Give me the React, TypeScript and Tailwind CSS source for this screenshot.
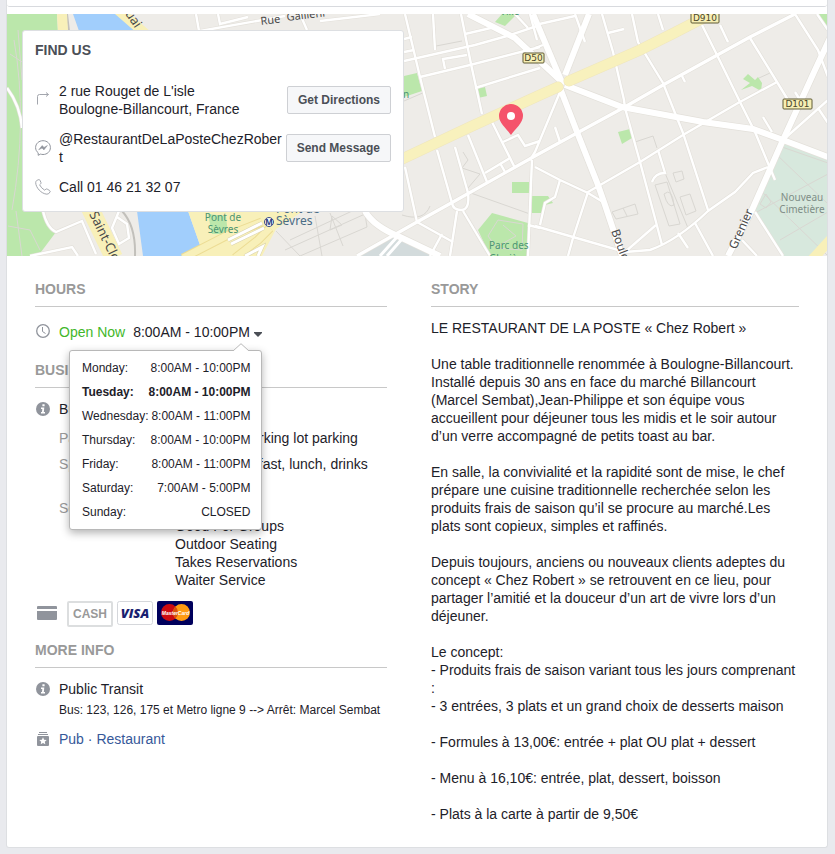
import React from "react";

const minorStreets = [
  "M405 14 420 77 435 137", "M437 150 452 203", "M433 14 435 50",
  "M461 14 471 64 482 114", "M468 135 487 182", "M320 21 380 14",
  "M404 61 475 45 507 36 540 25", "M465 34 495 27", "M420 77 470 65 540 47",
  "M445 69 443 59 467 55", "M475 88 540 68", "M492 122 515 168",
  "M503 142 518 135 525 146 540 141", "M485 173 510 158", "M500 163 505 172",
  "M455 147 468 193Q470 210 461 210 453 210 452 203", "M463 211 490 256",
  "M457 211 450 256", "M405 167 417 222 453 242", "M532 160 528 256",
  "M528 225 540 228", "M442 234 430 256", "M515 14 528 28", "M530 14 537 40",
  "M404 39 412 37", "M404 52 414 50",
  "M602 14 613 52 624 100 625 108 640 162 656 222 662 245",
  "M632 14 638 42 663 83 683 133 708 210", "M658 14 663 30",
  "M702 25 717 55 740 102 755 132 775 180", "M720 25 728 42",
  "M750 38 777 82 788 100", "M795 14 818 50 828 77", "M817 14 828 30",
  "M777 82 738 103 683 135 640 162 588 192 573 238 568 256",
  "M535 167 560 180 588 193 603 202", "M560 180 555 197 545 203 540 225",
  "M535 226 573 237 625 252 650 250Q678 240 708 211L735 192 753 173 768 167",
  "M608 33 624 29", "M535 25 575 16", "M575 14 585 42", "M555 127 560 142",
  "M763 117 772 132", "M795 92 800 100", "M783 140 828 100", "M818 108 828 123",
  "M658 150 665 173Q655 173 652 182", "M682 76 685 82", "M678 233 688 248",
  "M695 223 713 256", "M755 212 783 256", "M625 252 656 225", "M742 240 757 256",
  "M560 92 535 152 530 160", "M535 48 543 45",
  "M7 88Q20 105 22 128", "M43 211Q47 228 56 232L82 221 96 254", "M30 256 72 247 78 256",
  "M196 14 199 31", "M218 14 220 24 248 17", "M200 31 285 16", "M300 14 307 30",
  "M119 211 112 228 119 244 129 238 127 224 117 217",
];

const mainStreets = [
  "M795 14 750 37 663 85 623 108 577 133 535 156 453 202 417 222 357 256",
];

const avenues = [
  "M468 14 515 38 560 80", "M533 14 563 85", "M589 14 565 75",
  "M565 85 622 107 703 122 753 129 783 140 828 157",
  "M560 88 577 132 598 185 605 205 622 256",
  "M830 38 815 70 783 140 752 210 728 256",
  "M365 211Q373 226 400 237L440 256",
];

const buildings = [
  "M612 212 635 204 638 214 616 219ZM623 208 627 216",
  "M655 185 667 182 680 224 669 226Z", "M664 194Q672 187 674 205 668 209 664 194",
  "M673 173 682 171 684 179 676 182Z", "M680 197 690 194 696 211 686 215Z",
  "M635 142 653 136 657 148", "M665 173 688 228",
  "M775 153 828 204M755 213 828 174M780 240 828 212M760 190 828 256M782 147 828 163",
  "M760 204 766 194 771 202 766 208Z", "M759 78 770 73",
  "M285 250 365 214 367 227 300 256M290 240 365 205M315 216 322 256M330 213 343 246M330 230 332 216 342 225Z",
  "M276 231 300 256", "M463 152 468 160 462 168 480 174 468 188", "M468 192 530 214",
  "M498 220 523 224 522 250 497 248 488 236ZM503 225 516 236 500 245",
  "M402 215Q424 222 430 206", "M436 46 462 41", "M404 101 425 92",
  "M14 40Q28 120 12 210M18 30 22 80M10 54 22 62",
  "M8 226 30 230 40 250M16 211 22 256",
];

const boulevard = "M400 160 470 127 540 95 558 87M569 81 640 50 672 34 705 17";
const ramps = "M183 258 226 236 262 222M235 258 258 240 270 228";

function Badge({ x, y, w, label }: { x: number; y: number; w: number; label: string }) {
  return (
    <g>
      <rect x={x} y={y} width={w} height="10" rx="1" fill="#f6eeb4" stroke="#5f5a35" />
      <text x={x + w / 2} y={y + 8} textAnchor="middle" className="font-['DejaVu_Sans'] text-[9px]" fill="#4a472b">
        {label}
      </text>
    </g>
  );
}

function CityMap() {
  return (
    <svg
      className="absolute inset-0 h-full w-full font-['Noto_Sans']"
      viewBox="7 14 820 242"
      preserveAspectRatio="xMinYMin slice"
      role="img"
      aria-label="Map"
    >
      <rect x="7" y="14" width="820" height="242" fill="#eeece8" />
      <path d="M7 14H57L62 120 43 211 47 226 56 232 38 256H7Z" fill="#bbe7ab" />
      <path d="M73 14H117L136 32 120 120 188 211 200 245 183 256H143L137 211 100 120 79 31Z" fill="#a1cefc" />
      <path d="M357 256 397 234 440 256Z" fill="#d3dbdc" />
      <path d="M783 143 828 160V238L810 256H783L755 210Z" fill="#d7e8dd" />
      <g fill="#bbe7ab">
        <path d="M618 132 630 129 632 138 622 144Z" />
        <path d="M741 90 750 83 743 79 748 74 755 80 758 77 762 83 761 91 752 86Z" />
        <path d="M532 196 548 196 553 203 545 205 542 213H532Z" />
        <path d="M512 182H529V193H512Z" />
        <path d="M492 213 528 223V256H490L478 230Z" />
        <path d="M476 89 485 87 487 96 478 98Z" />
        <path d="M404 76 417 73 422 91 404 97Z" />
        <path d="M495 22 502 14H517L505 26Z" />
        <path d="M817 14H828V30Z" />
      </g>
      <path d="M188 211H303L276 229 262 256H183L200 245Z" fill="#f8f0b9" />
      <path d="M208 214 226 216 228 234 212 234Z" fill="#bbe7ab" />
      <g fill="none" stroke="#d9d7d2" strokeWidth="1">
        {buildings.map((d) => <path key={d} d={d} />)}
      </g>
      <g fill="none">
        <g stroke="#e3e0da" strokeWidth="3.6">
          {minorStreets.map((d) => <path key={d} d={d} />)}
        </g>
        <g stroke="#e3e0da" strokeWidth="7.4">
          {avenues.map((d) => <path key={d} d={d} />)}
        </g>
        <g stroke="#e3e0da" strokeWidth="4.4">
          {mainStreets.map((d) => <path key={d} d={d} />)}
        </g>
        <g stroke="#fff" strokeWidth="2.4">
          {minorStreets.map((d) => <path key={d} d={d} />)}
        </g>
        <g stroke="#fff" strokeWidth="3.2">
          {mainStreets.map((d) => <path key={d} d={d} />)}
        </g>
        <g stroke="#fff" strokeWidth="6">
          {avenues.map((d) => <path key={d} d={d} />)}
        </g>
        <path d="M380 256 397 237M387 256 402 239" stroke="#fff" strokeWidth="3" />
        <path d="M67 14 69 31M122 211Q136 226 135 256" stroke="#c2c0bb" strokeWidth="2" />
        <path d={boulevard} stroke="#efe6bd" strokeWidth="11" strokeLinecap="round" />
        <path d={boulevard} stroke="#f8f1bd" strokeWidth="10" strokeLinecap="round" />
        <path d="M62 14 63 31M118 10 148 36M810 262 832 238" stroke="#f8f0b9" strokeWidth="10" />
        <path d="M90 208 114 258" stroke="#f8f0b9" strokeWidth="18" />
        <path d={ramps} stroke="#ecdc94" strokeWidth="9" />
        <path d={ramps} stroke="#f8f0b9" strokeWidth="7" />
        <path d="M228 240 262 223M231 244 264 228M245 256 262 247 258 256" stroke="#d8d2b0" strokeWidth="4" />
        <path d="M228 240 262 223M231 244 264 228M245 256 262 247 258 256" stroke="#fff" strokeWidth="3" />
      </g>
      <Badge x={523} y={53} w={21} label="D50" />
      <Badge x={691} y={13} w={28} label="D910" />
      <Badge x={783} y={99} w={29} label="D101" />
      <g fill="#4a4a4a" className="text-[13px]">
        <text transform="translate(119 5) rotate(56)">Quai</text>
        <text transform="translate(89 214) rotate(64)">Saint-Cloud</text>
        <text transform="translate(261 25) rotate(-7)" className="text-[11px]">Rue</text>
        <text transform="translate(287 21) rotate(-7)" className="text-[11px]">Gallieni</text>
        <text transform="translate(611 231) rotate(70)" className="text-[12px]">Boulevard</text>
        <text transform="translate(736 250) rotate(-66)" className="text-[12px]">Grenier</text>
      </g>
      <g fill="#4b9472" className="text-[10px]">
        <text x="223" y="221" textAnchor="middle">Pont de</text>
        <text x="223" y="233" textAnchor="middle">Sèvres</text>
        <text x="489" y="249">Parc des</text>
        <text x="489" y="262">Glacières</text>
        <text x="403" y="98">n</text>
        <text x="500" y="15">Ville</text>
      </g>
      <g fill="#4a6d86" className="text-[12px]">
        <text x="276" y="213">Pont de</text>
        <text x="276" y="225">Sèvres</text>
      </g>
      <circle cx="269" cy="222" r="4.5" fill="#fff" stroke="#394e86" />
      <text x="269" y="225" textAnchor="middle" fill="#26397c" className="text-[8px] font-bold">M</text>
      <g fill="#7e8d86" className="text-[10px]">
        <text x="802" y="201" textAnchor="middle">Nouveau</text>
        <text x="802" y="213" textAnchor="middle">Cimetière</text>
      </g>
      <path d="M511 135C507 129 499 123 499 116A12 12 0 0 1 523 116C523 123 515 129 511 135Z" fill="#f5536b" />
      <circle cx="511" cy="116" r="4" fill="#fff" />
    </svg>
  );
}

function InfoIcon() {
  return (
    <svg className="mt-px h-4 w-4 shrink-0" viewBox="0 0 16 16" aria-hidden="true">
      <circle cx="8" cy="8" r="7" fill="#90949c" />
      <path d="M7.4 3.2h2.2v2H7.4zM6 6.5h3.3L8.8 11H10v1.4H6V11h1l.3-3H6z" fill="#fff" />
    </svg>
  );
}

function Heading({ children }: { children: React.ReactNode }) {
  return <h2 className="border-b border-[#c8c8c8] pb-2 text-sm/[18px] font-bold text-[#999]">{children}</h2>;
}

const hours = [
  ["Monday:", "8:00AM - 10:00PM"],
  ["Tuesday:", "8:00AM - 10:00PM"],
  ["Wednesday:", "8:00AM - 11:00PM"],
  ["Thursday:", "8:00AM - 10:00PM"],
  ["Friday:", "8:00AM - 11:00PM"],
  ["Saturday:", "7:00AM - 5:00PM"],
  ["Sunday:", "CLOSED"],
];

function HoursPopup() {
  return (
    <div className="absolute top-[27px] left-[34px] z-10 w-[193px] rounded-[3px] border border-[#b8b8b8] bg-white px-3 py-[5px] shadow-[0_3px_8px_rgba(0,0,0,0.3)]">
      <svg className="absolute -top-2 right-3 h-2 w-4" viewBox="0 0 16 8" aria-hidden="true">
        <path d="M0 8 8 0.7 16 8" fill="#fff" stroke="#b8b8b8" />
      </svg>
      <table className="w-full text-xs/6 whitespace-nowrap">
        <tbody>
          {hours.map(([day, time]) => {
            const weight = day === "Tuesday:" ? "font-bold" : "font-normal";
            return (
              <tr key={day}>
                <th scope="row" className={`p-0 text-left ${weight}`}>{day}</th>
                <td className={`p-0 text-right ${weight}`}>{time}</td>
              </tr>
            );
          })}
        </tbody>
      </table>
    </div>
  );
}

const details: [string, string[]][] = [
  ["Parking", ["Street and parking lot parking"]],
  ["Specialties", ["Coffee, breakfast, lunch, drinks", "and dinner"]],
  ["Services", ["Catering", "Good For Groups", "Outdoor Seating", "Takes Reservations", "Waiter Service"]],
];

const story = `LE RESTAURANT DE LA POSTE « Chez Robert »

Une table traditionnelle renommée à Boulogne-Billancourt. Installé depuis 30 ans en face du marché Billancourt (Marcel Sembat),Jean-Philippe et son équipe vous accueillent pour déjeuner tous les midis et le soir autour d’un verre accompagné de petits toast au bar.

En salle, la convivialité et la rapidité sont de mise, le chef prépare une cuisine traditionnelle recherchée selon les produits frais de saison qu’il se procure au marché.Les plats sont copieux, simples et raffinés.

Depuis toujours, anciens ou nouveaux clients adeptes du concept « Chez Robert » se retrouvent en ce lieu, pour partager l’amitié et la douceur d’un art de vivre lors d’un déjeuner.

Le concept:
- Produits frais de saison variant tous les jours comprenant :
- 3 entrées, 3 plats et un grand choix de desserts maison

- Formules à 13,00€: entrée + plat OU plat + dessert

- Menu à 16,10€: entrée, plat, dessert, boisson

- Plats à la carte à partir de 9,50€`;

const actionButton =
  "h-7 shrink-0 rounded-xs border border-[#ced0d4] bg-[#f6f7f9] px-2.5 text-xs font-bold text-[#4b4f56]";

function FindUs() {
  return (
    <section className="relative w-[382px] rounded-[3px] border border-[#dddfe2] bg-white px-3 pt-2.5 pb-[15px]">
      <h2 className="text-sm/[18px] font-bold text-[#4b4f56]">FIND US</h2>
      <div className="mt-[23px] flex flex-col gap-3">
        <div className="flex items-center">
          <svg className="mr-2 h-4 w-4 shrink-0" viewBox="0 0 16 16" fill="none" stroke="#a3a6ad" aria-hidden="true">
            <path d="M2.5 12.500V4.5Q2.5 2.5 4.5 2.5H13.500M11 .5 13.5 2.5 11 4.5" />
          </svg>
          <p className="flex-1">2 rue Rouget de L'isle<br />Boulogne-Billancourt, France</p>
          <button type="button" className={actionButton}>Get Directions</button>
        </div>
        <div className="flex items-center">
          <svg className="mr-2 h-4 w-4 shrink-0" viewBox="0 0 16 16" fill="none" stroke="#90949c" aria-hidden="true">
            <path d="M8 .7C3.8.7.6 3.7.6 7.6c0 2.200 1 4 2.600 5.200v2.500l2.300-1.200c.8.200 1.600.400 2.500.400 4.200 0 7.400-3 7.400-6.900S12.200.7 8 .7Z" />
            <path d="M3.700 9.800 7.200 5.500l1.800 1.900L12.400 5.500 8.900 9.900 7.100 8Z" fill="#90949c" strokeWidth=".5" />
          </svg>
          <p className="min-w-0 flex-1 break-all">@RestaurantDeLaPosteChezRobert</p>
          <button type="button" className={actionButton}>Send Message</button>
        </div>
        <div className="flex items-center">
          <svg className="mr-2 h-4 w-4 shrink-0" viewBox="0 0 16 16" fill="none" stroke="#a3a6ad" aria-hidden="true">
            <path d="M2.300 1.200 3.800.6Q4.500.4 4.900 1.200L6 3.600Q6.300 4.300 5.700 4.800L4.600 5.800Q6.200 9.100 9.700 11.200L10.900 10.200Q11.500 9.700 12.200 10.100L14.600 11.500Q15.500 12 15.100 12.800 14.100 15.200 11.900 15.200C6 14.700.8 8.400.7 3.700.8 2.200 1.400 1.500 2.300 1.200Z" />
          </svg>
          <p>Call 01 46 21 32 07</p>
        </div>
      </div>
    </section>
  );
}

export default function App() {
  return (
    <div className="min-h-screen bg-[#e9eaee] pr-[7px] pb-1.5 pl-1.5 font-['Liberation_Sans',Arial,sans-serif] text-sm/[18px] text-[#1d2129]">
      <main className="rounded-b-[3px] border-x border-b border-[#dddfe2] bg-white">
        <div className="h-[7px] rounded-b-[3px] border-b border-[#d8dade]" />
        <div className="relative mt-[7px] overflow-hidden pt-4 pb-11 pl-[15px]">
          <CityMap />
          <FindUs />
        </div>
        <div className="grid grid-cols-[352fr_368fr] gap-11 px-7 pt-6 pb-6">
          <div>
            <Heading>HOURS</Heading>
            <div className="relative mt-4 flex items-start">
              <svg className="mr-2 h-4 w-4 shrink-0" viewBox="0 0 16 16" fill="none" stroke="#90949c" aria-hidden="true">
                <circle cx="8" cy="8" r="6.300" strokeWidth="1.300" />
                <path d="M7.500 4V8.500L10.500 10.500" />
              </svg>
              <span className="mr-2 text-[#42b72a]">Open Now</span>
              <button type="button" aria-expanded="true" className="flex items-center gap-1">
                8:00AM - 10:00PM
                <svg className="mt-1 h-[5px] w-2" viewBox="0 0 8 5" aria-hidden="true">
                  <path d="M0 0H8V1L4 5 0 1Z" fill="#4b4f56" />
                </svg>
              </button>
              <HoursPopup />
            </div>
            <div className="mt-5">
              <Heading>BUSINESS INFO</Heading>
            </div>
            <div className="mt-3 flex gap-2">
              <InfoIcon />
              <div className="flex-1">
                <p>Business Details</p>
                <dl className="mt-[11px] grid grid-cols-[116px_1fr] gap-y-2">
                  {details.map(([label, lines]) => (
                    <React.Fragment key={label}>
                      <dt className="text-[#999]">{label}</dt>
                      <dd>{lines.map((line) => <div key={line}>{line}</div>)}</dd>
                    </React.Fragment>
                  ))}
                </dl>
              </div>
            </div>
            <div className="mt-3 flex items-start gap-1 pl-0.5">
              <svg className="mt-[5px] mr-1.5 h-3.5 w-5" viewBox="0 0 20 14" fill="#90949c" aria-hidden="true">
                <path d="M1 0H19Q20 0 20 1V3H0V1Q0 0 1 0ZM0 5H20V13Q20 14 19 14H1Q0 14 0 13Z" />
              </svg>
              <span className="flex h-[26px] w-[46px] items-center justify-center rounded-xs border-2 border-[#dcdedf] text-xs font-bold text-[#999]">CASH</span>
              <svg className="h-6 w-9" viewBox="0 0 36 24" role="img" aria-label="Visa">
                <rect x=".5" y=".5" width="35" height="23" rx="2" fill="#fff" stroke="#d5d7db" />
                <text x="18" y="17" textAnchor="middle" fill="#1a1f71" className="font-['Open_Sans'] text-[13px] font-extrabold italic">VISA</text>
              </svg>
              <svg className="h-6 w-9" viewBox="0 0 36 24" role="img" aria-label="MasterCard">
                <rect width="36" height="24" rx="2" fill="#00005c" />
                <circle cx="12.500" cy="11.500" r="8.500" fill="#cc0a10" />
                <circle cx="24.500" cy="11.500" r="8.500" fill="#ff9a12" />
                <path d="M18.500 5.500A8.500 8.500 0 0 1 18.500 17.500A8.500 8.500 0 0 1 18.500 5.500Z" fill="#d8500f" />
                <text x="18.500" y="13.500" textAnchor="middle" fill="#fff" className="text-[5px] font-bold italic">MasterCard</text>
              </svg>
            </div>
            <div className="mt-3.5">
              <Heading>MORE INFO</Heading>
            </div>
            <div className="mt-3 flex gap-2">
              <InfoIcon />
              <div>
                <p>Public Transit</p>
                <p className="mt-[3px] text-xs/[18px]">Bus: 123, 126, 175 et Metro ligne 9 --&gt; Arrêt: Marcel Sembat</p>
              </div>
            </div>
            <div className="mt-[11px] flex gap-2">
              <svg className="mt-px h-4 w-4 shrink-0" viewBox="0 0 16 16" fill="#90949c" aria-hidden="true">
                <path d="M4 1H12V2H4ZM3 3H13V4H3ZM3 5H13Q14 5 14 6V14Q14 15 13 15H3Q2 15 2 14V6Q2 5 3 5Z" />
                <path d="M8 6.300 9.100 8.700 11.700 9 9.800 10.700 10.300 13.300 8 12 5.700 13.300 6.200 10.700 4.300 9 6.900 8.700Z" fill="#fff" />
              </svg>
              <p className="text-[#365899]"><a href="#pub">Pub</a> · <a href="#restaurant">Restaurant</a></p>
            </div>
          </div>
          <div>
            <Heading>STORY</Heading>
            <p className="mt-3 whitespace-pre-line">{story}</p>
          </div>
        </div>
      </main>
    </div>
  );
}
